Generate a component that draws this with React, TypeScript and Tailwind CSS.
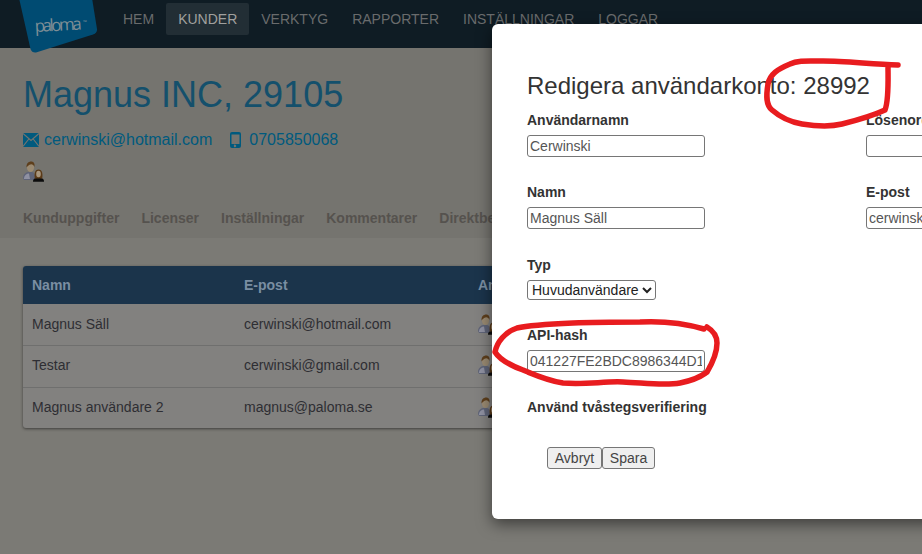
import React from 'react';

const navItems = ['HEM', 'KUNDER', 'VERKTYG', 'RAPPORTER', 'INSTÄLLNINGAR', 'LOGGAR'];
const subTabs = ['Kunduppgifter', 'Licenser', 'Inställningar', 'Kommentarer', 'Direktbetalning'];
const users = [
  { name: 'Magnus Säll', email: 'cerwinski@hotmail.com', rowClass: 'h-[41px]' },
  { name: 'Testar', email: 'cerwinski@gmail.com', rowClass: 'h-[42px] border-t border-[#6f6f6e] pb-[2px]' },
  { name: 'Magnus användare 2', email: 'magnus@paloma.se', rowClass: 'h-[41px] border-t border-[#6f6f6e] pb-[1px]' }
];

const UsersIcon = ({ className = '' }: { className?: string }) => (
  <svg className={className} width="22" height="21" viewBox="0 0 22 21">
    <path d="M0 17c0-4 3-5.500 5-6h4c2 .5 3 2 3 6l-1 2H1z" fill="#5f6478" />
    <path d="M1 17c.6-3 2.500-4.500 5-4.500l1 5.500H1z" fill="#8f91a2" />
    <ellipse cx="7.500" cy="6.500" rx="3.600" ry="4.600" fill="#9a8a72" />
    <path d="M3.600 6.500C3 2.200 6 .2 8.600.5c2.600.3 3.400 2.800 2.800 5.500-.6-2-2-2.800-3.800-2.600C6 3.600 5 4.600 3.600 6.500z" fill="#5e3f1c" />
    <path d="M10 20.800c-.3-2 1-3.200 3-3.800h5c2 .6 3.300 1.800 3 3.800z" fill="#0c0c0c" />
    <path d="M11.800 17.500c-.6-4-.4-9 3.700-9s4.300 5 3.700 9z" fill="#5a3a18" />
    <ellipse cx="15.500" cy="13" rx="2.300" ry="3.300" fill="#a8967e" />
  </svg>
);

const Field = ({ label, value, className = '' }: { label: string; value: string; className?: string }) => (
  <div className={`flex flex-col ${className}`}>
    <label className="font-bold text-[14px] leading-[20px] text-[#333] whitespace-nowrap">{label}</label>
    <input
      readOnly
      value={value}
      className="mt-[5px] w-[178px] h-[22px] px-[2px] border border-[#767676] rounded-[3px] text-[14px] text-[#555] bg-white outline-none"
    />
  </div>
);

export default function App() {
  return (
    <div className="relative w-[922px] h-[554px] overflow-hidden bg-[#7b7a75] font-['Liberation_Sans',Arial,sans-serif]">
      <header className="h-[48px] bg-[#0f1c24] pl-[111px] pt-[3px] flex items-start">
        {navItems.map((item) => (
          <a
            key={item}
            className={`h-[32px] px-[12px] rounded-[2px] text-[14px] leading-[32px] ${
              item === 'KUNDER' ? 'bg-[#222e35] text-[#a0a09e]' : 'text-[#696b6c]'
            }`}
          >
            {item}
          </a>
        ))}
      </header>

      {/* logo */}
      <svg className="absolute left-0 top-0" width="110" height="56" viewBox="0 0 110 56">
        <path d="M19 -2H92L97 29Q97.500 33 93 34.500L36 52.500Q32 53 30.500 49z" fill="#004b72" />
        <text x="35" y="32" transform="rotate(-3 35 32)" fontFamily="'Open Sans', sans-serif" fontSize="17" fill="#7e8e96" textLength="47">
          paloma
        </text>
        <text x="83" y="24" fontFamily="'Open Sans', sans-serif" fontSize="5" fontWeight="700" fill="#7e8e96">
          ™
        </text>
      </svg>

      <section className="h-[190px] bg-[#75746f] pl-[23px] pt-[25px]">
        <h1 className="text-[36px] leading-[44px] text-[#14506c]">Magnus INC, 29105</h1>
        <div className="mt-[13px] flex items-center h-[20px] text-[16px] text-[#005a7e]">
          <svg width="16" height="14" viewBox="0 0 16 14" className="mr-[5px]">
            <rect width="16" height="14" fill="#005a7e" />
            <path d="M0 .5l8 7 8-7M0 13.500l5.800-7.500M16 13.500l-5.800-7.500" fill="none" stroke="#75746f" strokeWidth="1.100" />
          </svg>
          <span>cerwinski@hotmail.com</span>
          <svg width="11" height="16" viewBox="0 0 11 16" className="ml-[18px] mr-[8px]" fill="#005a7e">
            <path fillRule="evenodd" d="M2 0h7a2 2 0 0 1 2 2v12a2 2 0 0 1-2 2H2a2 2 0 0 1-2-2V2a2 2 0 0 1 2-2zM1.500 2.500v9.500h8V2.500zM5.500 12.800a1.200 1.200 0 1 0 0 2.200 1.200 1.200 0 0 0 0-2.200z" />
          </svg>
          <span>0705850068</span>
        </div>
        <UsersIcon className="mt-[11px]" />
        <nav className="mt-[26px] flex gap-[22px] text-[14px] leading-[20px] font-bold text-[#55524e]">
          {subTabs.map((tab) => (
            <span key={tab} className="whitespace-nowrap">
              {tab}
            </span>
          ))}
        </nav>
      </section>

      <div className="ml-[23px] mt-[28px] w-[880px] rounded-[3px] bg-[#82817f] shadow-[0_1px_3px_rgba(0,0,0,0.5)] overflow-hidden text-[14px]">
        <div className="h-[38px] bg-[#1b344b] flex items-center font-bold text-[#7a8ea2]">
          <div className="w-[221px] pl-[9px]">Namn</div>
          <div className="w-[234px]">E-post</div>
          <div>Användare</div>
        </div>
        {users.map((user) => (
          <div key={user.email} className={`flex items-center text-[#2e2e33] ${user.rowClass}`}>
            <div className="w-[221px] pl-[9px]">{user.name}</div>
            <div className="w-[234px]">{user.email}</div>
            <UsersIcon />
          </div>
        ))}
      </div>

      {/* modal */}
      <div className="absolute left-[492px] top-[24px] w-[600px] h-[495px] bg-white rounded-[6px] shadow-[0_5px_15px_rgba(0,0,0,0.5)] pl-[35px] pt-[48px] text-[#333]">
        <h2 className="text-[24px] leading-[28px]">Redigera användarkonto: 28992</h2>
        <div className="mt-[10px] grid grid-cols-[339px_1fr] gap-y-[25px]">
          <Field label="Användarnamn" value="Cerwinski" />
          <Field label="Lösenord" value="" />
          <Field label="Namn" value="Magnus Säll" />
          <Field label="E-post" value="cerwinski@hotmail.com" />
        </div>
        <div className="mt-[26px] flex flex-col items-start">
          <label className="font-bold text-[14px] leading-[20px]">Typ</label>
          <select className="mt-[5px] w-[129px] h-[20px] border border-[#767676] rounded-[3px] text-[14px] text-[#222] bg-white">
            <option>Huvudanvändare</option>
          </select>
        </div>
        <Field label="API-hash" value="041227FE2BDC8986344D1A7F" className="mt-[25px]" />
        <div className="mt-[25px] font-bold text-[14px] leading-[20px]">Använd tvåstegsverifiering</div>
        <div className="mt-[30px] ml-[20px] flex text-[14px] text-[#444]">
          <button className="h-[22px] w-[55px] bg-[#efefef] border border-[#767676] rounded-[3px]">Avbryt</button>
          <button className="h-[22px] w-[53px] bg-[#efefef] border border-[#767676] rounded-[3px]">Spara</button>
        </div>
      </div>

      {/* red marker annotations */}
      <svg className="absolute inset-0 pointer-events-none" width="922" height="554" viewBox="0 0 922 554" fill="none" stroke="#e81c1f" strokeWidth="5.500" strokeLinecap="round" strokeLinejoin="round">
        <path d="M898 65C870 64 845 61 823 61C808 61 798 60 790 64C778 69 770 74 768 84C766 96 766 105 772 110C780 117 790 122 802 124C815 126 830 127 842 124C858 120 872 116 885 110C889 100 888 80 888 66" />
        <path d="M704 329C680 322 660 321 640 322C615 322 595 322 573 323C550 324 530 325 517 328C505 332 497 342 495 352C500 360 512 366 523 370C537 376 550 381 563 383C585 385 605 381 623 382C645 383 665 386 680 383C695 380 702 376 707 372C713 362 717 352 717 343C717 335 712 330 707 327" />
      </svg>
    </div>
  );
}
